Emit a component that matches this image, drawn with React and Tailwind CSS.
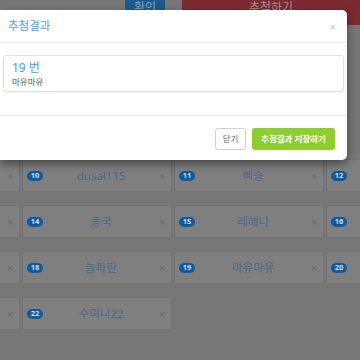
export default function App() {
  const rows = [
    [9, { n: 10, name: "dusal115" }, { n: 11, name: "삐송" }, 12],
    [13, { n: 14, name: "종국" }, { n: 15, name: "레헤나" }, 16],
    [17, { n: 18, name: "늘파란" }, { n: 19, name: "마유마유" }, 20],
    [21, { n: 22, name: "수미니22" }],
  ];
  const font = { fontFamily: '"Noto Sans", "Noto Sans CJK KR", sans-serif' };
  const Badge = ({ n }) => (
    <span className="w-[16px] h-[10px] shrink-0 rounded-full bg-[#0e5a9e] text-[#d3deea] text-[7.5px] font-bold flex items-center justify-center leading-none">
      {n}
    </span>
  );
  return (
    <div className="relative w-[360px] h-[360px] overflow-hidden bg-[#777777]" style={font}>
      <div className="flex h-[25px]">
        <div className="ml-[125px] w-[40px] bg-[#1d5a8e] flex items-start justify-center pt-[1px] text-[12px] leading-[14px] text-[#8c9fb3]">
          확인
        </div>
        <div className="ml-[17px] flex-1 bg-[#7b2a30] flex items-start justify-center pt-[1px] text-[12px] leading-[14px] text-[#b08a8e]">
          추첨하기
        </div>
      </div>
      <div className="mt-[134px] grid grid-cols-[20px_150px_150px_1fr] gap-x-[2px] gap-y-[13px]">
        {rows.map((row, ri) =>
          row.map((c, ci) => {
            if (ci === 0) {
              return (
                <div
                  key={`${ri}-${ci}`}
                  className="h-[33px] bg-[#7f7f7f] border-y border-r border-[#747474] flex items-center justify-end pr-[6px]"
                >
                  <span className="text-[10px] text-[#6a6a6a] leading-none">×</span>
                </div>
              );
            }
            if (ci === 3) {
              return (
                <div
                  key={`${ri}-${ci}`}
                  className="h-[33px] bg-[#7f7f7f] border-y border-l border-[#747474] flex items-center pl-[4px]"
                >
                  <Badge n={c} />
                </div>
              );
            }
            return (
              <div
                key={`${ri}-${ci}`}
                className="h-[33px] bg-[#7f7f7f] border border-[#747474] flex items-center pl-[4px] pr-[6px]"
              >
                <Badge n={c.n} />
                <span className="flex-1 text-center text-[11.5px] text-[#4d6988] leading-none">{c.name}</span>
                <span className="text-[10px] text-[#6a6a6a] leading-none">×</span>
              </div>
            );
          })
        )}
      </div>

      <div className="absolute left-0 top-[10px] w-[347px] h-[150px] bg-white rounded-r-[5px] shadow-[0_4px_10px_rgba(0,0,0,0.45)] flex flex-col">
        <div className="h-[33px] border-b border-[#e8e8e8] flex items-center justify-between pl-[8px] pr-[11px]">
          <span className="text-[11.5px] text-[#4ea3de]">추첨결과</span>
          <span className="text-[11px] text-[#c4c4c4] leading-none">×</span>
        </div>
        <div className="h-[73px] border-b border-[#e8e8e8] px-[3px] pt-[12px]">
          <div className="h-[37px] border border-[#e0e0e0] rounded-[3px] shadow-[0_1px_1px_rgba(0,0,0,0.05)] pl-[8px] pt-[4px] flex flex-col">
            <span className="text-[12px] text-[#4a9de0] leading-[16px]">19 번</span>
            <span className="text-[8.5px] text-[#555555] leading-[12px]">마유마유</span>
          </div>
        </div>
        <div className="flex-1 flex justify-end items-start pt-[12px] pr-[12px] gap-[6px]">
          <div className="h-[22px] w-[31px] border border-[#d0d0d0] rounded-[3px] bg-white flex items-center justify-center text-[8.5px] text-[#666666]">
            닫기
          </div>
          <div className="h-[22px] w-[83px] rounded-[3px] bg-[#8dcf2e] flex items-center justify-center text-[8.5px] font-bold text-white">
            추첨결과 저장하기
          </div>
        </div>
      </div>
    </div>
  );
}
